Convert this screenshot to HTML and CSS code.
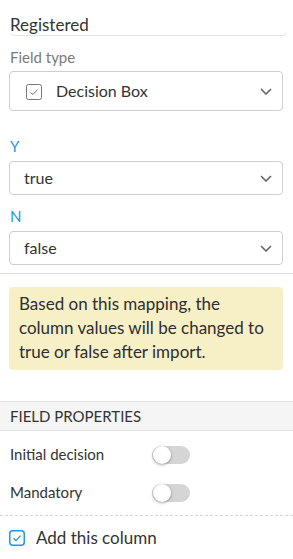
FILE: index.html
```html
<!DOCTYPE html>
<html lang="en">
<head>
    <meta charset="UTF-8">
    <meta name="viewport" content="width=device-width, initial-scale=1.0">
    <title>Column mapping</title>
    <link rel="stylesheet" href="styles.css">
</head>
<body>
    <div class="panel">
        <div class="name-input">Registered</div>

        <div class="field-label">Field type</div>
        <div class="select select-lg">
            <span class="type-icon">
                <svg width="16" height="16" viewBox="0 0 16 16"><rect x="0.5" y="0.5" width="15" height="15" rx="2" fill="none" stroke="#777" stroke-width="1"/><polyline points="4.5,8.5 7,10.5 11.5,5.5" fill="none" stroke="#777" stroke-width="1"/></svg>
            </span>
            <span class="select-text">Decision Box</span>
            <svg class="chevron" width="12" height="7" viewBox="0 0 12 7"><polyline points="1,1 6,6 11,1" fill="none" stroke="#666" stroke-width="1.6"/></svg>
        </div>

        <div class="map-label first">Y</div>
        <div class="select">
            <span class="select-text">true</span>
            <svg class="chevron" width="12" height="7" viewBox="0 0 12 7"><polyline points="1,1 6,6 11,1" fill="none" stroke="#666" stroke-width="1.6"/></svg>
        </div>
        <div class="map-label">N</div>
        <div class="select">
            <span class="select-text">false</span>
            <svg class="chevron" width="12" height="7" viewBox="0 0 12 7"><polyline points="1,1 6,6 11,1" fill="none" stroke="#666" stroke-width="1.6"/></svg>
        </div>
    </div>

    <div class="note-wrap">
        <div class="note">Based on this mapping, the column values will be changed to true or false after import.</div>
    </div>

    <div class="section-header">FIELD PROPERTIES</div>
    <div class="props">
        <div class="prop-row">
            <span class="prop-label">Initial decision</span>
            <span class="toggle"><span class="knob"></span></span>
        </div>
        <div class="prop-row">
            <span class="prop-label">Mandatory</span>
            <span class="toggle"><span class="knob"></span></span>
        </div>
    </div>

    <div class="add-row">
        <svg class="checkbox" width="16" height="16" viewBox="0 0 16 16"><rect x="0.75" y="0.75" width="14.5" height="14.5" rx="3" fill="#fff" stroke="#2196f3" stroke-width="1.5"/><polyline points="4.5,8.3 7,10.6 11.5,5.6" fill="none" stroke="#2196f3" stroke-width="1.4"/></svg>
        <span class="add-label">Add this column</span>
    </div>
</body>
</html>
```

FILE: styles.css
```css
body {margin: 0; width: 293px; font-family: Lato, "Open Sans", sans-serif; color: #333; background: #fff;}

.panel {padding: 0 10px 8px 9px; border-bottom: 1px solid #e2e2e2;}
.name-input {font-size: 17px; line-height: 20px; padding: 15px 2px 0 1px; margin-right: -5px; border-bottom: 1px solid #e4e4e4; border-radius: 0 0 6px 6px;}

.field-label {font-size: 15px; line-height: 18px; color: #7a7a7a; margin: 12px 0 5px 1px;}
.map-label {font-size: 15px; line-height: 18px; color: #2196f3; margin: 12px 0 6px 1px;}
.map-label.first {margin-top: 26px;}

.select {display: flex; align-items: center; height: 32px; border: 1px solid #cfcfcf; border-radius: 4px; padding: 0 10px 0 14px; font-size: 16px;}
.select-lg {height: 38px; padding-left: 16px;}
.select-text {flex: 1; line-height: 20px;}
.type-icon {display: flex; margin-right: 14px; margin-top: 1px;}
.chevron {display: block;}

.note-wrap {padding: 13px 10px 31px 9px; border-bottom: 1px solid #e2e2e2;}
.note {background: #f7f0c6; border-radius: 4px; padding: 5px 10px 6px 10px; font-size: 17px; line-height: 24px; color: #2e2e2e;}

.section-header {background: #f5f5f5; border-bottom: 1px solid #e2e2e2; font-size: 15px; line-height: 28px; padding: 0 10px; color: #333;}

.props {padding: 5px 10px 3px 10px; border-bottom: 1px dashed #d8d8d8;}
.prop-row {display: grid; grid-template-columns: 142px 38px; align-items: center; height: 38px;}
.prop-label {font-size: 15px; line-height: 20px; padding-bottom: 3px;}
.toggle {position: relative; display: block; width: 38px; height: 18px; border-radius: 9px; background: #d5d5d5;}
.knob {position: absolute; left: 1px; top: 0; width: 18px; height: 18px; border-radius: 50%; background: #fff; box-shadow: 0 1px 3px rgba(0, 0, 0, 0.35);}

.add-row {display: flex; align-items: center; padding: 14px 9px 0 9px;}
.checkbox {display: block; margin-right: 11px;}
.add-label {font-size: 17px; line-height: 16px;}
```
